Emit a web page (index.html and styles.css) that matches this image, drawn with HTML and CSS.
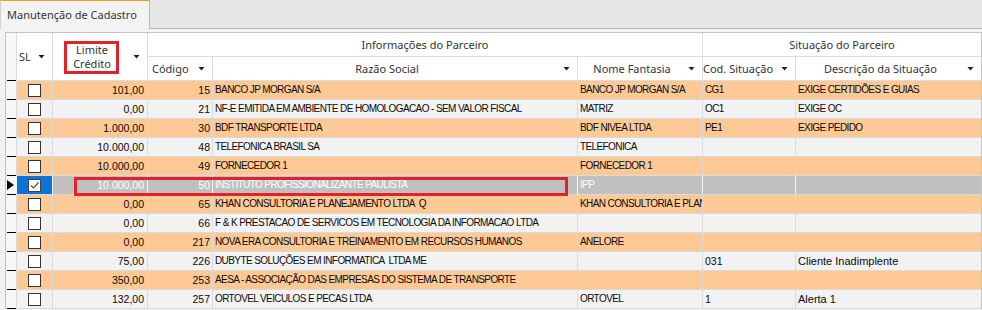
FILE: index.html
```html
<!DOCTYPE html>
<html lang="pt-BR">
<head>
    <meta charset="UTF-8">
    <title>Manutenção de Cadastro</title>
    <link rel="stylesheet" href="styles.css">
</head>
<body>
    <div class="tabs">
        <div class="tab">Manutenção de Cadastro</div>
    </div>

    <div class="grid">
        <div class="head">
            <div class="h ind"></div>
            <div class="h sl"><span class="t">SL</span><i class="arrow"></i></div>
            <div class="h lim"><span class="t c">Limite<br>Crédito</span><i class="arrow"></i></div>
            <div class="h info"><span class="t c">Informações do Parceiro</span></div>
            <div class="h sit"><span class="t c">Situação do Parceiro</span></div>
            <div class="h"><span class="t cod">Código</span><i class="arrow"></i></div>
            <div class="h"><span class="t c">Razão Social</span><i class="arrow"></i></div>
            <div class="h"><span class="t c">Nome Fantasia</span><i class="arrow"></i></div>
            <div class="h"><span class="t codsit">Cod. Situação</span><i class="arrow"></i></div>
            <div class="h last"><span class="t c">Descrição da Situação</span><i class="arrow"></i></div>
        </div>

        <div class="row odd">
            <div class="ind"></div><div class="chk"><span class="box"></span></div>
            <div class="num">101,00</div><div class="num">15</div>
            <div>BANCO JP MORGAN S/A</div><div>BANCO JP MORGAN S/A</div><div>CG1</div><div class="last">EXIGE CERTIDÕES E GUIAS</div>
        </div>
        <div class="row">
            <div class="ind"></div><div class="chk"><span class="box"></span></div>
            <div class="num">0,00</div><div class="num">21</div>
            <div>NF-E EMITIDA EM AMBIENTE DE HOMOLOGACAO - SEM VALOR FISCAL</div><div>MATRIZ</div><div>OC1</div><div class="last">EXIGE OC</div>
        </div>
        <div class="row odd">
            <div class="ind"></div><div class="chk"><span class="box"></span></div>
            <div class="num">1.000,00</div><div class="num">30</div>
            <div>BDF TRANSPORTE LTDA</div><div>BDF NIVEA LTDA</div><div>PE1</div><div class="last">EXIGE PEDIDO</div>
        </div>
        <div class="row">
            <div class="ind"></div><div class="chk"><span class="box"></span></div>
            <div class="num">10.000,00</div><div class="num">48</div>
            <div>TELEFONICA BRASIL SA</div><div>TELEFONICA</div><div></div><div class="last"></div>
        </div>
        <div class="row odd">
            <div class="ind"></div><div class="chk"><span class="box"></span></div>
            <div class="num">10.000,00</div><div class="num">49</div>
            <div>FORNECEDOR 1</div><div>FORNECEDOR 1</div><div></div><div class="last"></div>
        </div>
        <div class="row sel">
            <div class="ind"><i class="cursor"></i></div><div class="chk"><span class="box on"><svg width="11" height="11" viewBox="0 0 11 11"><path d="M2 5.5l2.5 2.5 5-5.5" fill="none" stroke="#555" stroke-width="1.2"/></svg></span></div>
            <div class="num">10.000,00</div><div class="num">50</div>
            <div>INSTITUTO PROFISSIONALIZANTE PAULISTA</div><div>IPP</div><div></div><div class="last"></div>
        </div>
        <div class="row odd">
            <div class="ind"></div><div class="chk"><span class="box"></span></div>
            <div class="num">0,00</div><div class="num">65</div>
            <div>KHAN CONSULTORIA E PLANEJAMENTO LTDA &nbsp;Q</div><div class="clip">KHAN CONSULTORIA E PLAN</div><div></div><div class="last"></div>
        </div>
        <div class="row">
            <div class="ind"></div><div class="chk"><span class="box"></span></div>
            <div class="num">0,00</div><div class="num">66</div>
            <div>F &amp; K PRESTACAO DE SERVICOS EM TECNOLOGIA DA INFORMACAO LTDA</div><div></div><div></div><div class="last"></div>
        </div>
        <div class="row odd">
            <div class="ind"></div><div class="chk"><span class="box"></span></div>
            <div class="num">0,00</div><div class="num">217</div>
            <div>NOVA ERA CONSULTORIA E TREINAMENTO EM RECURSOS HUMANOS</div><div>ANELORE</div><div></div><div class="last"></div>
        </div>
        <div class="row">
            <div class="ind"></div><div class="chk"><span class="box"></span></div>
            <div class="num">75,00</div><div class="num">226</div>
            <div>DUBYTE SOLUÇÕES EM INFORMATICA &nbsp;LTDA ME</div><div></div><div class="num-l">031</div><div class="last lc">Cliente Inadimplente</div>
        </div>
        <div class="row odd">
            <div class="ind"></div><div class="chk"><span class="box"></span></div>
            <div class="num">350,00</div><div class="num">253</div>
            <div>AESA - ASSOCIAÇÃO DAS EMPRESAS DO SISTEMA DE TRANSPORTE</div><div></div><div></div><div class="last"></div>
        </div>
        <div class="row">
            <div class="ind"></div><div class="chk"><span class="box"></span></div>
            <div class="num">132,00</div><div class="num">257</div>
            <div>ORTOVEL VEICULOS E PECAS LTDA</div><div>ORTOVEL</div><div class="num-l">1</div><div class="last lc">Alerta 1</div>
        </div>
    </div>

    <div class="mark mark-head"></div>
    <div class="mark mark-row"></div>
</body>
</html>
```

FILE: styles.css
```css
body { margin: 0; background: #f3f3f3; font-family: 'Noto Sans', 'Liberation Sans', sans-serif; color: #333; width: 982px; height: 310px; overflow: hidden; position: relative; }

.tabs { height: 28px; background: #e6e6e6; border-bottom: 1px solid #b9b9b9; display: flex; }
.tab {
    width: 150px;
    height: 29px;
    box-sizing: border-box;
    background: #f3f3f3;
    border-top: 1px solid #f0a030;
    border-right: 1px solid #b9b9b9;
    border-left: 1px solid #d0d0d0;
    font-size: 11px;
    line-height: 27px;
    padding-left: 6px;
    color: #333;
}

.grid {
    margin: 3px 0 0 5px;
    width: 977px;
    box-sizing: border-box;
    border: 1px solid #c4c4c4;
    border-bottom: none;
    background: #fff;
}

.head, .row {
    display: grid;
    grid-template-columns: 11px 36px 95px 65px 365px 125px 93px 185px;
}
.head { grid-template-rows: 24px 24px; }

.h {
    display: flex;
    align-items: center;
    box-sizing: border-box;
    border-right: 1px solid #dcdcdc;
    border-bottom: 1px solid #dcdcdc;
    font-size: 11px;
    color: #333;
    background: #fff;
}
.h.last { border-right: none; }
.h .t { flex: 1; white-space: nowrap; }
.h .t.c { text-align: center; }
.h .cod { padding-left: 4px; }
.h .codsit { padding-left: 0; }
.h.ind, .h.sl, .h.lim { grid-row: 1 / 3; }
.h.sl .t { padding-left: 2px; }
.h.lim .t { line-height: 14px; padding-top: 1px; }
.h.info { grid-column: 4 / 7; }
.h.sit { grid-column: 7 / 9; border-right: none; }
.h.ind { border-bottom: none; background: #f7f7f7 linear-gradient(#000, #000) no-repeat 1px 100% / 9px 1px; }

.arrow {
    width: 7px;
    height: 4px;
    margin: 0 7px 0 2px;
    background: #222;
    clip-path: polygon(0 0, 100% 0, 50% 100%);
}

.row { height: 19px; background: #f2f2f2; }
.row.odd { background: #ffc996; }
.row > div {
    box-sizing: border-box;
    border-right: 1px solid #dadada;
    border-bottom: 1px solid #dadada;
    font-family: 'Liberation Sans', Arial, sans-serif;
    font-size: 10px;
    letter-spacing: -0.6px;
    line-height: 18px;
    color: #0a0a0a;
    padding: 0 2px;
    white-space: nowrap;
    overflow: hidden;
}
.row > div.last { border-right: none; }
.row > .num { text-align: right; font-size: 10.5px; letter-spacing: 0; padding-right: 2px; }
.row > .num:nth-child(3) { padding-right: 3px; }
.row > .num-l { font-size: 10.5px; letter-spacing: 0; }
.row > .lc { font-size: 11px; letter-spacing: 0; }

.row > .ind {
    border-bottom: none;
    padding: 0 0 1px 1px;
    background: #f7f7f7 linear-gradient(#000, #000) no-repeat 1px 100% / 9px 1px;
    display: flex;
    align-items: center;
}
.cursor {
    width: 0;
    height: 0;
    border-left: 7px solid #000;
    border-top: 5.5px solid transparent;
    border-bottom: 5.5px solid transparent;
}

.row > .chk { display: flex; align-items: center; justify-content: center; padding: 0; }
.box {
    width: 13px;
    height: 13px;
    box-sizing: border-box;
    border: 1px solid #333;
    background: #fff;
    display: flex;
    align-items: center;
    justify-content: center;
}
.box.on { border-color: #444; background: #fafafa; }

.row.sel { background: #c0c0c0; }
.row.sel > div { color: #fff; border-right-color: #f4f4f4; }
.row.sel > .chk { background: #0a74d8; }
.row.sel > .ind { background-color: #f7f7f7; }

.mark { position: absolute; border: 3px solid #e3212b; box-sizing: border-box; }
.mark-head { left: 64px; top: 41px; width: 55px; height: 33px; }
.mark-row { left: 74px; top: 177px; width: 494px; height: 19px; }
```
